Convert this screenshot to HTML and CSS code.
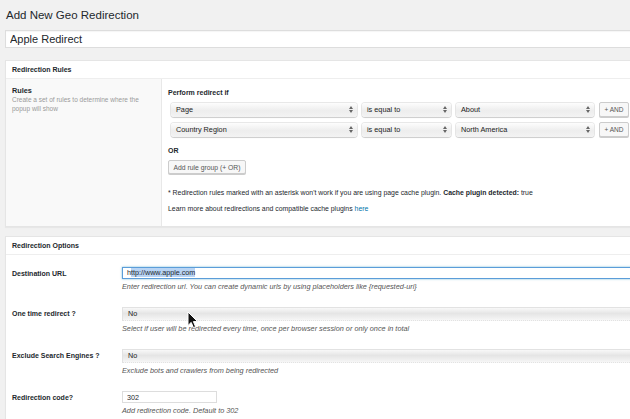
FILE: index.html
```html
<!DOCTYPE html>
<html lang="en">
  <head>
    <meta charset="UTF-8" />
    <title>Add New Geo Redirection</title>
    <link rel="stylesheet" href="styles.css">
  </head>
  <body>
    <div class="wrap">
      <h1>Add New Geo Redirection</h1>
      <input type="text" class="title-input" value="Apple Redirect" />

      <!-- Rules box -->
      <div class="postbox rules-box">
        <h2 class="hndle">Redirection Rules</h2>
        <div class="rules-body">
          <div class="rules-side">
            <div class="side-title">Rules</div>
            <p class="side-desc">Create a set of rules to determine where the popup will show</p>
          </div>
          <div class="rules-main">
            <div class="group-title">Perform redirect if</div>
            <div class="rule-row">
              <div class="select sel-param"><span>Page</span><svg width="4" height="7" viewBox="0 0 4 7"><path d="M0 3L2 0L4 3Z M0 4L2 7L4 4Z" fill="#666"/></svg></div>
              <div class="select sel-op"><span>is equal to</span><svg width="4" height="7" viewBox="0 0 4 7"><path d="M0 3L2 0L4 3Z M0 4L2 7L4 4Z" fill="#666"/></svg></div>
              <div class="select sel-value"><span>About</span><svg width="4" height="7" viewBox="0 0 4 7"><path d="M0 3L2 0L4 3Z M0 4L2 7L4 4Z" fill="#666"/></svg></div>
              <button class="btn btn-and">+ AND</button>
            </div>
            <div class="rule-row">
              <div class="select sel-param"><span>Country Region</span><svg width="4" height="7" viewBox="0 0 4 7"><path d="M0 3L2 0L4 3Z M0 4L2 7L4 4Z" fill="#666"/></svg></div>
              <div class="select sel-op"><span>is equal to</span><svg width="4" height="7" viewBox="0 0 4 7"><path d="M0 3L2 0L4 3Z M0 4L2 7L4 4Z" fill="#666"/></svg></div>
              <div class="select sel-value"><span>North America</span><svg width="4" height="7" viewBox="0 0 4 7"><path d="M0 3L2 0L4 3Z M0 4L2 7L4 4Z" fill="#666"/></svg></div>
              <button class="btn btn-and">+ AND</button>
            </div>
            <div class="or-title">OR</div>
            <button class="btn btn-group">Add rule group (+ OR)</button>
            <p class="notice">* Redirection rules marked with an asterisk won't work if you are using page cache plugin. <strong>Cache plugin detected:</strong> true</p>
            <p class="notice notice-link">Learn more about redirections and compatible cache plugins <a href="#">here</a></p>
          </div>
        </div>
      </div>

      <!-- Options box -->
      <div class="postbox options-box">
        <h2 class="hndle">Redirection Options</h2>
        <div class="options-body">
          <div class="option-row">
            <label class="opt-label">Destination URL</label>
            <div class="opt-field">
              <div class="url-field">h<span class="selected">ttp://www.apple.com</span></div>
              <p class="help">Enter redirection url. You can create dynamic urls by using placeholders like {requested-uri}</p>
            </div>
          </div>
          <div class="option-row">
            <label class="opt-label">One time redirect ?</label>
            <div class="opt-field">
              <div class="wide-select">No</div>
              <p class="help">Select if user will be redirected every time, once per browser session or only once in total</p>
            </div>
          </div>
          <div class="option-row">
            <label class="opt-label">Exclude Search Engines ?</label>
            <div class="opt-field">
              <div class="wide-select">No</div>
              <p class="help">Exclude bots and crawlers from being redirected</p>
            </div>
          </div>
          <div class="option-row">
            <label class="opt-label">Redirection code?</label>
            <div class="opt-field">
              <input type="text" class="code-input" value="302" />
              <p class="help">Add redirection code. Default to 302</p>
            </div>
          </div>
        </div>
      </div>
    </div>

    <!-- mouse pointer -->
    <svg class="cursor" width="12" height="18" viewBox="0 0 12 18">
      <path d="M1 1L1 14.5L4.2 11.4L6.4 16.6L8.6 15.7L6.4 10.6L10.6 10.6Z" fill="#111" stroke="#fff" stroke-width="1"/>
    </svg>
  </body>
</html>
```

FILE: styles.css
```css
* {
  box-sizing: border-box;
}

body {
  margin: 0;
  height: 419px;
  overflow: hidden;
  background-color: #f1f1f1;
  font-family: "Liberation Sans", Arial, sans-serif;
  color: #23282d;
}

.wrap {
  width: 645px;
  padding-left: 5px;
}

h1 {
  margin: 0;
  padding: 8px 0 0 1px;
  font-size: 11.5px;
  font-weight: 400;
  line-height: 15px;
}

.title-input {
  display: block;
  width: 100%;
  height: 18px;
  margin: 7px 0 0;
  padding: 0 4px;
  border: 1px solid #ddd;
  background: #fff;
  font: 11px "Liberation Sans", Arial, sans-serif;
  color: #23282d;
  box-shadow: inset 0 1px 1px rgba(0, 0, 0, 0.04);
}

/* Boxes */
.postbox {
  background-color: #fff;
  border: 1px solid #e5e5e5;
  box-shadow: 0 1px 1px rgba(0, 0, 0, 0.04);
}

.rules-box {
  margin-top: 12px;
}

.options-box {
  margin-top: 9px;
}

.hndle {
  margin: 0;
  padding: 0 6px;
  font-size: 7px;
  font-weight: bold;
  line-height: 17px;
  border-bottom: 1px solid #eee;
}

/* Rules */
.rules-body {
  display: flex;
}

.rules-side {
  width: 156px;
  padding: 7px 6px 0;
  background-color: #f9f9f9;
  border-right: 1px solid #e8e8e8;
}

.side-title {
  font-size: 7.3px;
  font-weight: bold;
  line-height: 9px;
}

.side-desc {
  margin: 0;
  font-size: 6.5px;
  line-height: 9px;
  color: #999;
}

.rules-main {
  flex: 1;
  padding: 9px 6px 13px;
}

.group-title,
.or-title {
  font-size: 7px;
  font-weight: bold;
  line-height: 9px;
}

.rule-row {
  display: flex;
  align-items: center;
  gap: 5px;
  margin: 5px 0 0 3px;
}

.select {
  display: flex;
  align-items: center;
  justify-content: space-between;
  height: 14px;
  padding: 0 4px 0 5px;
  border-radius: 3px;
  background: linear-gradient(#fdfdfd, #ededed 55%, #f3f3f3);
  box-shadow: 0 0 0 1px rgba(0, 0, 0, 0.09), 0 1px 1px rgba(0, 0, 0, 0.12);
  font-size: 7.3px;
  color: #222;
}

.sel-param {
  width: 186px;
}

.sel-op {
  width: 89px;
}

.sel-value {
  width: 138px;
}

.btn {
  padding: 0;
  border: 1px solid #ccc;
  border-radius: 2px;
  background-color: #f7f7f7;
  box-shadow: 0 1px 0 #ccc;
  font-family: "Liberation Sans", Arial, sans-serif;
  font-size: 6.8px;
  color: #555;
  cursor: pointer;
}

.btn-and {
  width: 30px;
  height: 15px;
  font-size: 6.5px;
}

.or-title {
  margin-top: 9px;
}

.btn-group {
  display: block;
  width: 78px;
  height: 14px;
  margin-top: 5px;
}

.notice {
  margin: 14px 0 0;
  font-size: 6.9px;
  line-height: 9px;
}

.notice-link {
  margin-top: 7px;
}

.notice a {
  color: #0073aa;
  text-decoration: none;
}

/* Options */
.options-body {
  padding: 4px 0 0;
}

.option-row {
  display: grid;
  grid-template-columns: 110px 1fr;
  padding: 8px 0 8px 6px;
}

.opt-label {
  font-size: 7px;
  font-weight: bold;
  line-height: 13px;
}

.opt-field {
  min-width: 0;
}

.url-field {
  height: 12px;
  padding: 0 4px;
  border: 1px solid #5b9dd9;
  box-shadow: 0 0 2px rgba(30, 140, 190, 0.6);
  font-size: 7.2px;
  line-height: 10px;
  white-space: nowrap;
}

.selected {
  background-color: #b8d4f4;
}

.wide-select {
  height: 14px;
  padding: 0 5px;
  border: 1px solid #e2e2e2;
  border-bottom-style: dotted;
  background: linear-gradient(#f8f8f8, #e5e5e5 45%, #ececec 70%, #f6f6f6);
  font-size: 7.2px;
  line-height: 12px;
  color: #222;
}

.code-input {
  display: block;
  width: 95px;
  height: 12px;
  margin: 0;
  padding: 0 4px;
  border: 1px solid #ddd;
  background: #fff;
  font: 7.2px "Liberation Sans", Arial, sans-serif;
  color: #23282d;
}

.help {
  margin: 3px 0 0;
  font-size: 7.3px;
  font-style: italic;
  line-height: 9px;
  color: #555;
  white-space: nowrap;
}

.cursor {
  position: absolute;
  left: 187px;
  top: 311px;
}
```
